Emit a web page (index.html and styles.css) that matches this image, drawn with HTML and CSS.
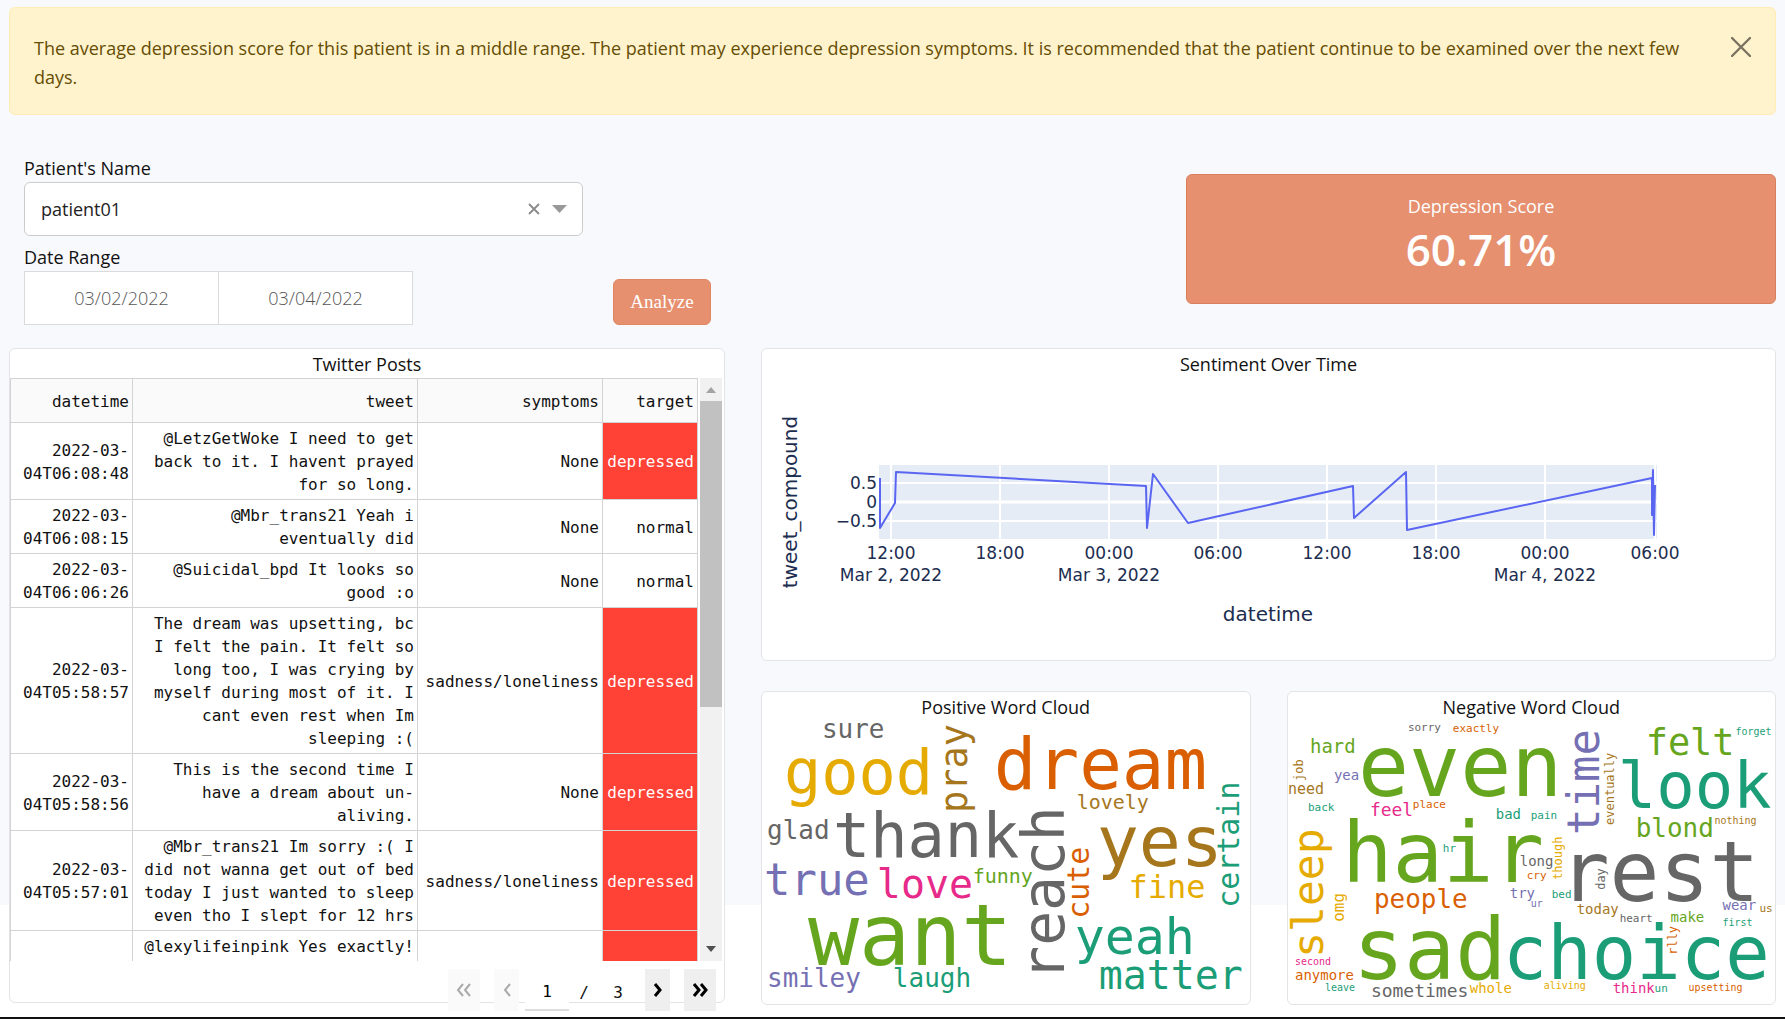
FILE: index.html
```html
<!DOCTYPE html>
<html lang="en">
<head>
<meta charset="utf-8">
<meta name="viewport" content="width=device-width, initial-scale=1">
<title>Depression Dashboard</title>
<link rel="stylesheet" href="styles.css">
</head>
<body>
<main class="page">
  <div class="alert" role="alert">
    <p class="alert-text">The average depression score for this patient is in a middle range. The patient may experience depression symptoms. It is recommended that the patient continue to be examined over the next few days.</p>
    <button class="alert-close" type="button" aria-label="Close">
      <svg width="20" height="20" viewBox="0 0 20 20"><path d="M1 1 L19 19 M19 1 L1 19" stroke="#7b7361" stroke-width="2.4" stroke-linecap="round"/></svg>
    </button>
  </div>

  <section class="controls">
    <form class="filters">
      <div class="fields">
        <label class="label" for="patient">Patient's Name</label>
        <div class="select-wrap">
          <select id="patient" class="select"><option>patient01</option></select>
          <div class="select-icons">
            <button class="select-clear" type="button" aria-label="Clear value"><svg width="12" height="12" viewBox="0 0 12 12"><path d="M1 1 L11 11 M11 1 L1 11" stroke="#8a8a8a" stroke-width="1.8"/></svg></button>
            <svg width="15" height="8" viewBox="0 0 15 8"><path d="M0 0 H15 L7.5 8 Z" fill="#999"/></svg>
          </div>
        </div>
        <label class="label label-date" for="start">Date Range</label>
        <div class="dates">
          <input id="start" class="date" type="text" value="03/02/2022">
          <input class="date" type="text" value="03/04/2022" aria-label="End date">
        </div>
      </div>
      <button class="analyze" type="button">Analyze</button>
    </form>
    <div class="score">
      <span class="score-label">Depression Score</span>
      <strong class="score-value">60.71%</strong>
    </div>
  </section>

  <section class="panels">
    <article class="card posts">
      <h2 class="card-title">Twitter Posts</h2>
      <div class="table-view">
        <div class="table-clip">
          <table class="table">
            <colgroup><col class="col-date"><col><col class="col-symptoms"><col class="col-target"></colgroup>
            <thead><tr><th>datetime</th><th>tweet</th><th>symptoms</th><th>target</th></tr></thead>
            <tbody>
              <tr><td>2022-03-<br>04T06:08:48</td><td>@LetzGetWoke I need to get back to it. I havent prayed for so long.</td><td>None</td><td class="bad">depressed</td></tr>
              <tr><td>2022-03-<br>04T06:08:15</td><td>@Mbr_trans21 Yeah i eventually did</td><td>None</td><td>normal</td></tr>
              <tr><td>2022-03-<br>04T06:06:26</td><td>@Suicidal_bpd It looks so good :o</td><td>None</td><td>normal</td></tr>
              <tr><td>2022-03-<br>04T05:58:57</td><td>The dream was upsetting, bc I felt the pain. It felt so long too, I was crying by myself during most of it. I cant even rest when Im sleeping :(</td><td>sadness/loneliness</td><td class="bad">depressed</td></tr>
              <tr><td>2022-03-<br>04T05:58:56</td><td>This is the second time I have a dream about un-aliving.</td><td>None</td><td class="bad">depressed</td></tr>
              <tr><td>2022-03-<br>04T05:57:01</td><td>@Mbr_trans21 Im sorry :( I did not wanna get out of bed today I just wanted to sleep even tho I slept for 12 hrs</td><td>sadness/loneliness</td><td class="bad">depressed</td></tr>
              <tr class="tall"><td></td><td>@lexylifeinpink Yes exactly!</td><td></td><td class="bad"></td></tr>
            </tbody>
          </table>
        </div>
        <div class="scrollbar">
          <svg class="scroll-arrow" viewBox="0 0 22 23"><path d="M6 15 L11 9 L16 15 Z" fill="#a3a3a3"/></svg>
          <div class="scroll-track"><div class="scroll-thumb"></div></div>
          <svg class="scroll-arrow" viewBox="0 0 22 23"><path d="M6 8 L11 14 L16 8 Z" fill="#505050"/></svg>
        </div>
      </div>
      <nav class="pager" aria-label="Table pages">
        <button class="pager-btn wide" type="button" disabled aria-label="First page"><svg width="18" height="16" viewBox="0 0 18 16"><path d="M8 2 L3 8 L8 14 M15 2 L10 8 L15 14"/></svg></button>
        <button class="pager-btn" type="button" disabled aria-label="Previous page"><svg width="12" height="16" viewBox="0 0 12 16"><path d="M9 2 L4 8 L9 14"/></svg></button>
        <input class="pager-input" type="text" value="1" aria-label="Page">
        <span class="pager-of">/</span>
        <span class="pager-total">3</span>
        <button class="pager-btn" type="button" aria-label="Next page"><svg width="12" height="16" viewBox="0 0 12 16"><path d="M3 2 L8 8 L3 14"/></svg></button>
        <button class="pager-btn wide" type="button" aria-label="Last page"><svg width="18" height="16" viewBox="0 0 18 16"><path d="M3 2 L8 8 L3 14 M10 2 L15 8 L10 14"/></svg></button>
      </nav>
    </article>

    <div class="charts">
      <article class="card">
        <h2 class="card-title">Sentiment Over Time</h2>
        <svg class="chart" viewBox="762 378 1013 282" role="img" aria-label="Sentiment over time">
          <rect x="879" y="465" width="778" height="74" fill="#e5ecf6"/>
          <g stroke="#fff" stroke-width="2">
            <path d="M891 465V539M1000 465V539M1109 465V539M1218 465V539M1327 465V539M1436 465V539M1545 465V539M1655 465V539M879 483H1657M879 521H1657"/>
            <path d="M879 502H1657" stroke-width="3"/>
          </g>
          <path class="chart-line" d="M880 478V528L895 503L896 472L1146 486L1147 528L1153 474L1188 523L1353 486L1354 518L1406 472L1407 530L1652 478L1652 515L1653 470L1654 535L1655 485"/>
          <g class="tick tick-y"><text x="877" y="489">0.5</text><text x="877" y="508">0</text><text x="877" y="527">−0.5</text></g>
          <g class="tick tick-x">
            <text x="891" y="559">12:00</text><text x="891" y="581">Mar 2, 2022</text>
            <text x="1000" y="559">18:00</text>
            <text x="1109" y="559">00:00</text><text x="1109" y="581">Mar 3, 2022</text>
            <text x="1218" y="559">06:00</text><text x="1327" y="559">12:00</text><text x="1436" y="559">18:00</text>
            <text x="1545" y="559">00:00</text><text x="1545" y="581">Mar 4, 2022</text>
            <text x="1655" y="559">06:00</text>
          </g>
          <text class="axis" x="1268" y="621">datetime</text>
          <text class="axis" transform="translate(797 502) rotate(-90)">tweet_compound</text>
        </svg>
      </article>

      <div class="clouds">
        <article class="card">
          <h2 class="card-title">Positive Word Cloud</h2>
          <svg class="cloud" viewBox="7 41 488 283" role="img" aria-label="Positive words">
            <g class="gray"><text x="67" y="58" font-size="26">sure</text><text x="12" y="159" font-size="26">glad</text><text x="78" y="177" font-size="62">thank</text><text transform="translate(309 301) rotate(-90)" font-size="58">reach</text></g>
            <g class="gold"><text x="29" y="114" font-size="62">good</text><text x="374" y="218" font-size="32">fine</text></g>
            <g class="brown"><text transform="translate(212 133) rotate(-90)" font-size="37">pray</text><text x="322" y="129" font-size="20">lovely</text><text x="342" y="186" font-size="70">yes</text></g>
            <g class="orange"><text x="239" y="109" font-size="71">dream</text><text transform="translate(334 239) rotate(-90)" font-size="30">cute</text></g>
            <g class="teal"><text transform="translate(484 228) rotate(-90)" font-size="30">certain</text><text x="320" y="274" font-size="50">yeah</text><text x="138" y="307" font-size="26">laugh</text><text x="344" y="309" font-size="40">matter</text></g>
            <g class="purple"><text x="9" y="215" font-size="44">true</text><text x="12" y="307" font-size="26">smiley</text></g>
            <g class="pink"><text x="122" y="218" font-size="40">love</text></g>
            <g class="green"><text x="218" y="203" font-size="20">funny</text><text x="53" y="285" font-size="85">want</text></g>
          </svg>
        </article>
        <article class="card">
          <h2 class="card-title">Negative Word Cloud</h2>
          <svg class="cloud" viewBox="12 41 488 283" role="img" aria-label="Negative words">
            <g class="gray"><text x="132" y="51" font-size="11">sorry</text><text x="244" y="186" font-size="14">long</text><text x="284" y="221" font-size="83">rest</text><text transform="translate(329 210) rotate(-90)" font-size="12">day</text><text x="344" y="242" font-size="11">heart</text><text x="95" y="317" font-size="18">sometimes</text></g>
            <g class="orange"><text x="177" y="52" font-size="11">exactly</text><text x="137" y="128" font-size="11">place</text><text x="251" y="199" font-size="11">cry</text><text x="98" y="228" font-size="26">people</text><text transform="translate(401 275) rotate(-90)" font-size="12">rlly</text><text x="19" y="300" font-size="14">anymore</text><text x="413" y="311" font-size="10">upsetting</text></g>
            <g class="green"><text x="34" y="73" font-size="19">hard</text><text x="82" y="116" font-size="85">even</text><text x="370" y="75" font-size="37">felt</text><text x="360" y="157" font-size="26">blond</text><text x="66" y="202" font-size="84">hair</text><text x="395" y="242" font-size="14">make</text><text x="77" y="299" font-size="85">sad</text></g>
            <g class="purple"><text transform="translate(323 155) rotate(-90)" font-size="44">time</text><text x="58" y="100" font-size="14">yea</text><text x="234" y="218" font-size="14">try</text><text x="255" y="227" font-size="10">ur</text><text x="447" y="230" font-size="14">wear</text></g>
            <g class="teal"><text x="460" y="55" font-size="10">forget</text><text x="32" y="131" font-size="11">back</text><text x="220" y="139" font-size="14">bad</text><text x="255" y="139" font-size="11">pain</text><text x="342" y="128" font-size="64">look</text><text x="167" y="172" font-size="11">hr</text><text x="276" y="218" font-size="11">bed</text><text x="447" y="246" font-size="10">first</text><text x="227" y="299" font-size="74">choice</text><text x="49" y="311" font-size="10">leave</text><text x="379" y="312" font-size="11">un</text></g>
            <g class="brown"><text transform="translate(27 101) rotate(-90)" font-size="12">job</text><text x="12" y="114" font-size="15">need</text><text transform="translate(338 145) rotate(-90)" font-size="12">eventually</text><text x="439" y="144" font-size="10">nothing</text><text x="301" y="234" font-size="14">today</text><text x="484" y="232" font-size="11">us</text></g>
            <g class="pink"><text x="94" y="136" font-size="18">feel</text><text x="19" y="285" font-size="10">second</text><text x="337" y="313" font-size="14">think</text></g>
            <g class="gold"><text transform="translate(47 278) rotate(-90)" font-size="43">sleep</text><text transform="translate(286 200) rotate(-90)" font-size="12">though</text><text transform="translate(68 242) rotate(-90)" font-size="16">omg</text><text x="194" y="313" font-size="14">whole</text><text x="268" y="309" font-size="10">aliving</text></g>
          </svg>
        </article>
      </div>
    </div>
  </section>
</main>
</body>
</html>
```
FILE: styles.css
```css
* { box-sizing: border-box; }

body {
  margin: 0;
  font: 18px/29px "Open Sans", "Noto Sans", sans-serif;
  color: #111;
  background: linear-gradient(#f8f9fc 905px, #fff 905px);
}

.page {
  padding: 7px 9px 12px;
  border-bottom: 2px solid #111;
}

.alert {
  display: flex;
  align-items: flex-start;
  gap: 24px;
  padding: 26px 24px 22px;
  border: 1px solid #ffecb5;
  border-radius: 6px;
  background: #fff3cd;
  color: #664d03;
}
.alert-text { flex: 1; margin: 0; }
.alert-close {
  display: flex;
  margin: 3px 0 0;
  padding: 0;
  border: 0;
  background: none;
}

.controls {
  display: flex;
  justify-content: space-between;
  margin-top: 39px;
}
.filters {
  display: flex;
  align-items: flex-end;
  gap: 30px;
  padding-left: 15px;
}
.fields { width: 559px; }
.label { display: block; height: 28px; }
.label-date { margin-top: 7px; }

.select-wrap { position: relative; }
.select {
  display: block;
  width: 100%;
  height: 54px;
  padding: 0 16px;
  border: 1px solid #ccc;
  border-radius: 6px;
  background: #fff;
  color: #222;
  font: inherit;
  appearance: none;
}
.select-icons {
  position: absolute;
  inset: 0 16px 0 auto;
  display: flex;
  align-items: center;
  gap: 12px;
}
.select-clear { display: flex; padding: 0; border: 0; background: none; }

.dates { display: flex; }
.date {
  width: 195px;
  height: 54px;
  border: 1px solid #dbdbdb;
  background: #fff;
  color: #555;
  font: inherit;
  font-weight: 300;
  text-align: center;
}
.date + .date { margin-left: -1px; }

.analyze {
  width: 98px;
  height: 46px;
  padding: 0;
  border: 1px solid #e08663;
  border-radius: 6px;
  background: #e6906f;
  color: #fff;
  font: 19px "Liberation Serif", serif;
}

.score {
  display: flex;
  flex-direction: column;
  align-items: center;
  width: 590px;
  height: 130px;
  margin-top: 20px;
  padding-top: 17px;
  border: 1px solid #d97f5d;
  border-radius: 6px;
  background: #e6906f;
  color: #fff;
}
.score-value { font-size: 44px; line-height: 56px; font-weight: 600; }

.panels {
  display: grid;
  grid-template-columns: 716fr 1015fr;
  gap: 36px;
  margin-top: 23px;
}
.card {
  min-width: 0;
  border: 1px solid #e3e4e6;
  border-radius: 6px;
  background: #fff;
}
.card-title {
  height: 29px;
  margin: 0;
  padding-top: 1px;
  font-size: 18px;
  line-height: 29px;
  font-weight: 400;
  text-align: center;
}

.posts { height: 655px; }
.table-view { display: flex; height: 583px; }
.table-clip { flex: 1; overflow: hidden; }
.table {
  width: 100%;
  table-layout: fixed;
  border-collapse: collapse;
  font: 16px/23px "DejaVu Sans Mono", monospace;
  text-align: right;
}
.col-date { width: 122px; }
.col-symptoms { width: 185px; }
.col-target { width: 95px; }
.table th, .table td {
  padding: 4px 3px 3px 4px;
  border: 1px solid #d3d3d3;
}
.table th { height: 44px; background: #fafafa; font-weight: 400; }
.table .bad { background: #ff4136; color: #fff; }
.tall td { height: 60px; vertical-align: top; }

.scrollbar {
  display: flex;
  flex-direction: column;
  width: 26px;
  padding: 0 2px;
}
.scroll-arrow { display: block; width: 22px; height: 23px; background: #f1f1f1; }
.scroll-track { flex: 1; background: #f1f1f1; }
.scroll-thumb { height: 306px; background: #c1c1c1; }

.pager {
  display: flex;
  justify-content: flex-end;
  margin-top: 8px;
  padding-right: 8px;
  font: 16px/42px "DejaVu Sans Mono", monospace;
}
.pager-btn {
  display: flex;
  align-items: center;
  justify-content: center;
  width: 25px;
  height: 42px;
  margin-left: 14px;
  padding: 0;
  border: 0;
  background: #efefef;
}
.pager-btn.wide { width: 32px; }
.pager-btn:first-child { margin-left: 0; }
.pager-total + .pager-btn { margin-left: 8px; }
.pager-btn path { fill: none; stroke: #000; stroke-width: 3; }
.pager-btn:disabled { background: #fafafa; }
.pager-btn:disabled path { stroke: #aaa; stroke-width: 2; }
.pager-input {
  width: 44px;
  height: 42px;
  margin-left: 6px;
  padding: 6px 0 0;
  border: 0;
  border-bottom: 2px solid #ddd;
  background: #fff;
  font: inherit;
  text-align: center;
}
.pager-of, .pager-total { padding-top: 3px; text-align: center; }
.pager-of { width: 30px; }
.pager-total { width: 38px; }

.charts { display: flex; flex-direction: column; gap: 30px; }
.clouds { display: grid; grid-template-columns: 1fr 1fr; gap: 36px; }
.chart, .cloud { display: block; width: 100%; overflow: visible; }

.tick { font: 17px "DejaVu Sans", sans-serif; fill: #1c2d50; }
.tick-x, .axis { text-anchor: middle; }
.tick-y { text-anchor: end; }
.axis { font: 20px "DejaVu Sans", sans-serif; fill: #1c2d50; }
.chart-line { fill: none; stroke: #5a66f2; stroke-width: 2; stroke-linejoin: round; }

.cloud { font-family: "DejaVu Sans Mono", monospace; }
.gray { fill: #666; }
.gold { fill: #e6ab02; }
.brown { fill: #a6761d; }
.orange { fill: #d95f02; }
.teal { fill: #1b9e77; }
.purple { fill: #7570b3; }
.pink { fill: #e7298a; }
.green { fill: #66a61e; }
```
